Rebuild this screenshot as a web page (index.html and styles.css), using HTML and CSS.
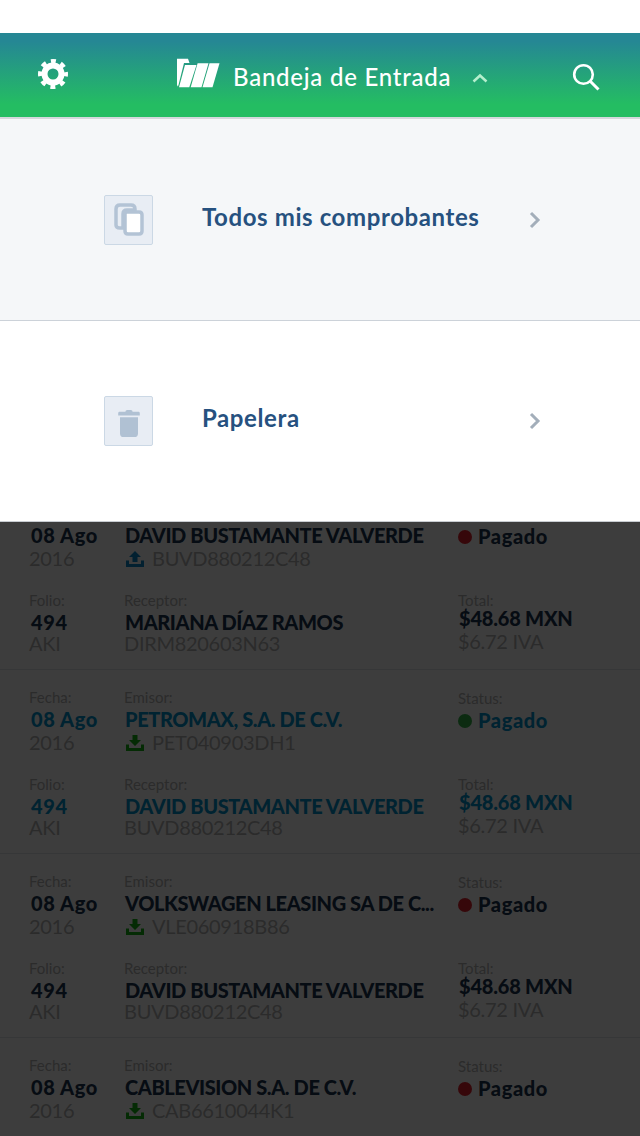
FILE: index.html
```html
<!DOCTYPE html>
<html>
<head>
    <title>Bandeja de Entrada</title>
    <link rel="stylesheet" href="styles.css">
</head>
<body>
    <div class="status-bar"></div>

    <header class="top-bar">
        <svg class="gear" viewBox="0 0 30 30">
            <circle cx="15" cy="15" r="8.500" fill="none" stroke="#fff" stroke-width="6"/>
            <circle cx="15" cy="15" r="13" fill="none" stroke="#fff" stroke-width="4" stroke-dasharray="5 5.210" stroke-dashoffset="2.500"/>
        </svg>
        <div class="title-group">
            <svg class="logo" viewBox="0 0 43 30">
                <path fill="#fff" d="M0 .7H11L12.500 5H7L1.500 27 .8 28.500 0 27Z"/>
                <path fill="#fff" d="M8 7H19.500L12.300 29.300H2Z"/>
                <path fill="#fff" d="M20.600 5.300H31.500L24.500 29.300H13.700Z"/>
                <path fill="#fff" d="M32.500 5.300H42.500L35.500 29.300H25.500Z"/>
            </svg>
            <span class="title">Bandeja de Entrada</span>
            <svg class="chevron-up" viewBox="0 0 16 10">
                <path d="M1.500 8.500 8 2.500 14.500 8.500" fill="none" stroke="#b5efce" stroke-width="2.500"/>
            </svg>
        </div>
        <svg class="search" viewBox="0 0 28 28">
            <circle cx="11.500" cy="11.500" r="9.300" fill="none" stroke="#fff" stroke-width="2.600"/>
            <path d="M18 18 26.500 26.500" stroke="#fff" stroke-width="3"/>
        </svg>
    </header>

    <nav class="menu">
        <div class="menu-item menu-item-shaded">
            <span class="menu-icon">
                <svg viewBox="0 0 32 36" width="32" height="36">
                    <path d="M12 3H7Q3 3 3 7V23Q3 26 7 26H10V12Q10 8 14 8H22V7Q22 3 18 3Z" fill="none" stroke="#b3c3d5" stroke-width="3.500"/>
                    <path d="M14 10H26Q29 10 29 13V29Q29 32 26 32H15Q12 32 12 29V12Q12 10 14 10Z" fill="#fff" stroke="#b3c3d5" stroke-width="3.500"/>
                </svg>
            </span>
            <span class="menu-label">Todos mis comprobantes</span>
            <svg class="chevron-right" viewBox="0 0 12 18">
                <path d="M2 2 9 9 2 16" fill="none" stroke="#a3aeba" stroke-width="3"/>
            </svg>
        </div>
        <div class="menu-item">
            <span class="menu-icon">
                <svg class="trash" viewBox="0 0 24 30" width="22" height="27">
                    <path fill="#b0c1d3" d="M8 2Q8 0 10 0H14Q16 0 16 2H23Q24 2 24 4V6H0V4Q0 2 1 2ZM2 8H22V26Q22 30 18 30H6Q2 30 2 26Z"/>
                </svg>
            </span>
            <span class="menu-label menu-label-low">Papelera</span>
            <svg class="chevron-right" viewBox="0 0 12 18">
                <path d="M2 2 9 9 2 16" fill="none" stroke="#a3aeba" stroke-width="3"/>
            </svg>
        </div>
    </nav>

    <main class="list">
        <div class="row">
            <div class="cell"><div class="label">Fecha:</div><div class="value">08 Ago</div><div class="sub">2016</div></div>
            <div class="cell"><div class="label">Emisor:</div><div class="value name">DAVID BUSTAMANTE VALVERDE</div><div class="sub"><svg class="tray tray-up" viewBox="0 0 18 16"><path d="M9 0 15 6H11.500V11H6.500V6H3ZM0 9.500H3V13H15V9.500H18V16H0Z"/></svg>BUVD880212C48</div></div>
            <div class="cell status-cell"><div class="label">Status:</div><div class="value"><i class="dot dot-red"></i>Pagado</div></div>
            <div class="cell"><div class="label">Folio:</div><div class="value">494</div><div class="sub">AKI</div></div>
            <div class="cell"><div class="label">Receptor:</div><div class="value name">MARIANA DÍAZ RAMOS</div><div class="sub">DIRM820603N63</div></div>
            <div class="cell total-cell"><div class="label">Total:</div><div class="value amount">$48.68 MXN</div><div class="sub">$6.72 IVA</div></div>
        </div>
        <div class="row row-unread">
            <div class="cell"><div class="label">Fecha:</div><div class="value">08 Ago</div><div class="sub">2016</div></div>
            <div class="cell"><div class="label">Emisor:</div><div class="value name">PETROMAX, S.A. DE C.V.</div><div class="sub"><svg class="tray" viewBox="0 0 18 16"><path d="M6.500 0H11.500V5H15L9 11 3 5H6.500ZM0 9.500H3V13H15V9.500H18V16H0Z"/></svg>PET040903DH1</div></div>
            <div class="cell status-cell"><div class="label">Status:</div><div class="value"><i class="dot dot-green"></i>Pagado</div></div>
            <div class="cell"><div class="label">Folio:</div><div class="value">494</div><div class="sub">AKI</div></div>
            <div class="cell"><div class="label">Receptor:</div><div class="value name">DAVID BUSTAMANTE VALVERDE</div><div class="sub">BUVD880212C48</div></div>
            <div class="cell total-cell"><div class="label">Total:</div><div class="value amount">$48.68 MXN</div><div class="sub">$6.72 IVA</div></div>
        </div>
        <div class="row">
            <div class="cell"><div class="label">Fecha:</div><div class="value">08 Ago</div><div class="sub">2016</div></div>
            <div class="cell"><div class="label">Emisor:</div><div class="value name">VOLKSWAGEN LEASING SA DE C...</div><div class="sub"><svg class="tray" viewBox="0 0 18 16"><path d="M6.500 0H11.500V5H15L9 11 3 5H6.500ZM0 9.500H3V13H15V9.500H18V16H0Z"/></svg>VLE060918B86</div></div>
            <div class="cell status-cell"><div class="label">Status:</div><div class="value"><i class="dot dot-red"></i>Pagado</div></div>
            <div class="cell"><div class="label">Folio:</div><div class="value">494</div><div class="sub">AKI</div></div>
            <div class="cell"><div class="label">Receptor:</div><div class="value name">DAVID BUSTAMANTE VALVERDE</div><div class="sub">BUVD880212C48</div></div>
            <div class="cell total-cell"><div class="label">Total:</div><div class="value amount">$48.68 MXN</div><div class="sub">$6.72 IVA</div></div>
        </div>
        <div class="row">
            <div class="cell"><div class="label">Fecha:</div><div class="value">08 Ago</div><div class="sub">2016</div></div>
            <div class="cell"><div class="label">Emisor:</div><div class="value name">CABLEVISION S.A. DE C.V.</div><div class="sub"><svg class="tray" viewBox="0 0 18 16"><path d="M6.500 0H11.500V5H15L9 11 3 5H6.500ZM0 9.500H3V13H15V9.500H18V16H0Z"/></svg>CAB6610044K1</div></div>
            <div class="cell status-cell"><div class="label">Status:</div><div class="value"><i class="dot dot-red"></i>Pagado</div></div>
        </div>
    </main>
</body>
</html>
```

FILE: styles.css
```css
html, body {
    margin: 0;
    height: 1136px;
    overflow: hidden;
    background-color: #fff;
    font-family: Lato, "Open Sans", sans-serif;
}

.status-bar {
    height: 33px;
    background-color: #fff;
}

/* Header */
.top-bar {
    display: flex;
    align-items: center;
    height: 84px;
    padding: 0 40px 0 38px;
    background: linear-gradient(#258794 10%, #24bd62 85%);
    border-bottom: 2px solid #d4d8dc;
    position: relative;
    z-index: 2;
}

.gear {
    width: 30px;
    height: 30px;
    margin-top: -2px;
}

.title-group {
    display: flex;
    align-items: center;
    margin-left: 109px;
    flex: 1;
}

.logo {
    width: 43px;
    height: 30px;
    margin-top: -4px;
}

.title {
    margin-top: 2px;
    margin-left: 13px;
    color: #fff;
    font-size: 24px;
    font-weight: 500;
    letter-spacing: 0.75px;
}

.chevron-up {
    width: 16px;
    height: 10px;
    margin-left: 21px;
    margin-top: 6px;
}

.search {
    width: 28px;
    height: 28px;
    margin-top: 4px;
}

/* Dropdown panel */
.menu {
    position: relative;
    z-index: 2;
    background-color: #fff;
    border-bottom: 1px solid #c8ccd1;
}

.menu-item {
    display: flex;
    align-items: center;
    height: 200px;
    padding: 0 99px 0 104px;
}

.menu-item-shaded {
    box-sizing: border-box;
    height: 202px;
    background-color: #f5f7f9;
    border-bottom: 1px solid #ccd2d9;
}

.menu-icon {
    display: flex;
    align-items: center;
    justify-content: center;
    width: 47px;
    height: 48px;
    background-color: #e8edf4;
    border: 1px solid #cbd8e5;
    border-radius: 2px;
}

.trash {
    margin-top: 5px;
}

.menu-label {
    flex: 1;
    margin-left: 49px;
    margin-top: -6px;
    color: #26517f;
    font-size: 24px;
    font-weight: 700;
    letter-spacing: 0.6px;
}

.menu-label-low {
    margin-top: -8px;
}

.chevron-right {
    width: 12px;
    height: 18px;
}

/* Dimmed list under the panel */
.list {
    position: relative;
    height: 650px;
    margin-top: -36px;
    overflow: hidden;
}

.list::after {
    content: "";
    position: absolute;
    top: 36px;
    left: 0;
    right: 0;
    bottom: 0;
    background-color: rgba(0, 0, 0, 0.76);
}

.row {
    display: grid;
    grid-template-columns: 95px 334px 1fr;
    grid-auto-rows: 66px;
    row-gap: 21px;
    box-sizing: border-box;
    height: 184px;
    padding: 17px 0 0 29px;
    border-bottom: 1px solid #e3e6ea;
}

.label {
    height: 20px;
    line-height: 20px;
    color: #b4b4b4;
    font-size: 15px;
}

.value {
    height: 23px;
    margin-top: 1px;
    padding-left: 2px;
    line-height: 23px;
    color: #1b3550;
    font-size: 20px;
    font-weight: 900;
    letter-spacing: 0.6px;
    white-space: nowrap;
}

.value.name {
    padding-left: 1px;
    letter-spacing: -0.4px;
}

.row-unread .value {
    color: #0092cc;
}

.sub {
    display: flex;
    align-items: center;
    height: 23px;
    line-height: 23px;
    color: #b4b4b4;
    font-size: 20px;
    letter-spacing: -0.3px;
}

/* second block of a row sits a little tighter */
.cell:nth-child(n+4) .sub {
    margin-top: -2px;
}

.status-cell .label {
    margin-top: 1px;
}

.status-cell .value {
    display: flex;
    align-items: center;
    padding-left: 0;
}

.total-cell .label {
    height: 16px;
    padding-top: 2px;
    line-height: 16px;
}

.value.amount {
    height: 19px;
    padding-left: 1px;
    line-height: 19px;
    letter-spacing: -0.2px;
}

.cell.total-cell .sub {
    margin-top: 2px;
}

.tray {
    width: 18px;
    height: 16px;
    margin: 0 8px 0 2px;
    fill: #14b314;
}

.tray-up {
    fill: #0a86c8;
}

.dot {
    width: 14px;
    height: 14px;
    margin-right: 6px;
    border-radius: 50%;
}

.dot-red {
    background-color: #e0212b;
}

.dot-green {
    background-color: #32b34a;
}
```
